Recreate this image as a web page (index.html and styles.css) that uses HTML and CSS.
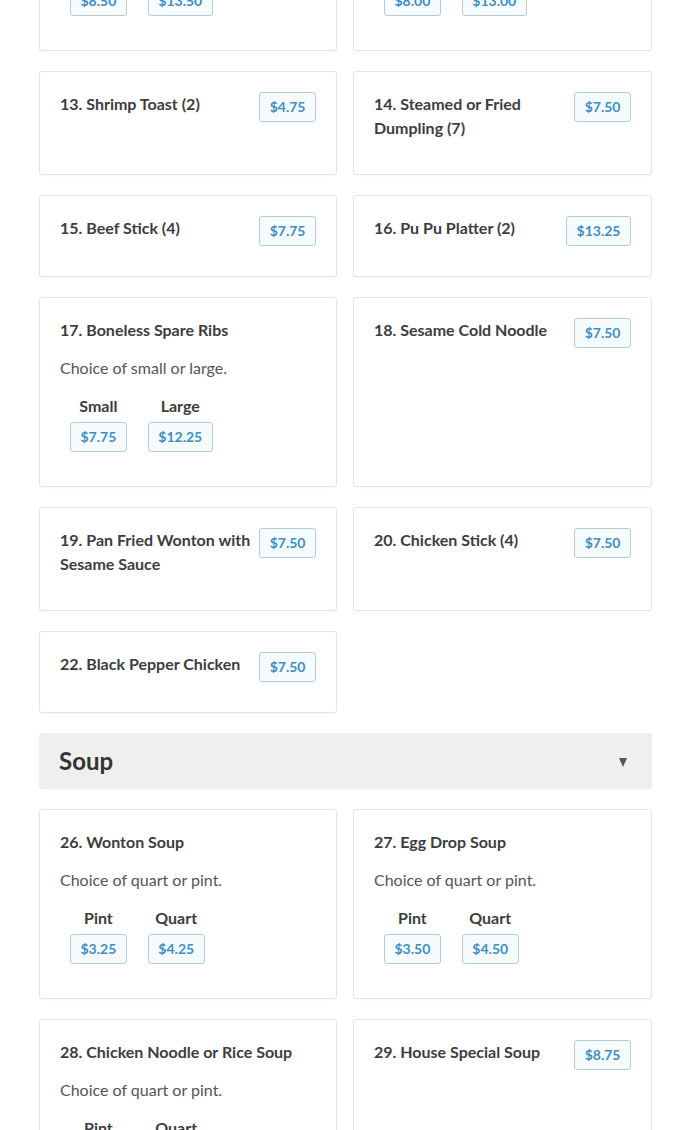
FILE: index.html
```html
<!DOCTYPE html>
<html lang="en">
<head>
<meta charset="utf-8">
<title>Menu</title>
<link rel="stylesheet" href="styles.css">
</head>
<body>
<main class="menu">
  <section class="grid">
    <article class="card">
      <div class="head"><h3 class="title">11. Chicken Wings</h3></div>
      <p class="desc">Choice of small or large.</p>
      <div class="options">
        <div class="opt"><span class="label">Small</span><span class="price">$8.50</span></div>
        <div class="opt"><span class="label">Large</span><span class="price">$13.50</span></div>
      </div>
    </article>
    <article class="card">
      <div class="head"><h3 class="title">12. Spare Ribs</h3></div>
      <p class="desc">Choice of small or large.</p>
      <div class="options">
        <div class="opt"><span class="label">Small</span><span class="price">$8.00</span></div>
        <div class="opt"><span class="label">Large</span><span class="price">$13.00</span></div>
      </div>
    </article>
    <article class="card">
      <div class="head"><h3 class="title">13. Shrimp Toast (2)</h3><span class="price">$4.75</span></div>
    </article>
    <article class="card">
      <div class="head"><h3 class="title">14. Steamed or Fried Dumpling (7)</h3><span class="price">$7.50</span></div>
    </article>
    <article class="card">
      <div class="head"><h3 class="title">15. Beef Stick (4)</h3><span class="price">$7.75</span></div>
    </article>
    <article class="card">
      <div class="head"><h3 class="title">16. Pu Pu Platter (2)</h3><span class="price">$13.25</span></div>
    </article>
    <article class="card">
      <div class="head"><h3 class="title">17. Boneless Spare Ribs</h3></div>
      <p class="desc">Choice of small or large.</p>
      <div class="options">
        <div class="opt"><span class="label">Small</span><span class="price">$7.75</span></div>
        <div class="opt"><span class="label">Large</span><span class="price">$12.25</span></div>
      </div>
    </article>
    <article class="card">
      <div class="head"><h3 class="title">18. Sesame Cold Noodle</h3><span class="price">$7.50</span></div>
    </article>
    <article class="card">
      <div class="head"><h3 class="title">19. Pan Fried Wonton with Sesame Sauce</h3><span class="price">$7.50</span></div>
    </article>
    <article class="card">
      <div class="head"><h3 class="title">20. Chicken Stick (4)</h3><span class="price">$7.50</span></div>
    </article>
    <article class="card">
      <div class="head"><h3 class="title">22. Black Pepper Chicken</h3><span class="price">$7.50</span></div>
    </article>
  </section>

  <header class="section-head">
    <h2 class="section-title">Soup</h2>
    <span class="caret"></span>
  </header>

  <section class="grid">
    <article class="card">
      <div class="head"><h3 class="title">26. Wonton Soup</h3></div>
      <p class="desc">Choice of quart or pint.</p>
      <div class="options">
        <div class="opt"><span class="label">Pint</span><span class="price">$3.25</span></div>
        <div class="opt"><span class="label">Quart</span><span class="price">$4.25</span></div>
      </div>
    </article>
    <article class="card">
      <div class="head"><h3 class="title">27. Egg Drop Soup</h3></div>
      <p class="desc">Choice of quart or pint.</p>
      <div class="options">
        <div class="opt"><span class="label">Pint</span><span class="price">$3.50</span></div>
        <div class="opt"><span class="label">Quart</span><span class="price">$4.50</span></div>
      </div>
    </article>
    <article class="card">
      <div class="head"><h3 class="title">28. Chicken Noodle or Rice Soup</h3></div>
      <p class="desc">Choice of quart or pint.</p>
      <div class="options">
        <div class="opt"><span class="label">Pint</span><span class="price">$3.25</span></div>
        <div class="opt"><span class="label">Quart</span><span class="price">$4.25</span></div>
      </div>
    </article>
    <article class="card">
      <div class="head"><h3 class="title">29. House Special Soup</h3><span class="price">$8.75</span></div>
    </article>
  </section>
</main>
</body>
</html>
```

FILE: styles.css
```css
html, body {
  margin: 0;
  padding: 0;
  background: #ffffff;
}

body {
  font-family: Lato, "Open Sans", "Liberation Sans", sans-serif;
  color: #3b3b3b;
  padding: 0 38px 0 39px;
  overflow: hidden;
}

.menu {
  margin-top: -139px;
  display: flex;
  flex-direction: column;
  gap: 20px;
}

.grid {
  display: grid;
  grid-template-columns: 298px 1fr;
  column-gap: 16px;
  row-gap: 20px;
}

.card {
  border: 1px solid #e4e4e4;
  border-radius: 3px;
  padding: 20px;
  background: #fff;
  box-shadow: 0 1px 2px rgba(0, 0, 0, 0.03);
}

.head {
  display: flex;
  justify-content: space-between;
  align-items: flex-start;
  gap: 8px;
}

.title {
  margin: 0 0 14px;
  font-size: 16px;
  line-height: 24px;
  font-weight: 700;
  color: #3d3d3f;
}

.head .price {
  margin-bottom: 10px;
}

.desc {
  margin: 0 0 14px;
  font-size: 16px;
  line-height: 24px;
  color: #555;
}

.options {
  display: flex;
  gap: 21px;
  padding-left: 10px;
  margin-bottom: 14px;
}

.opt {
  display: flex;
  flex-direction: column;
  align-items: center;
  gap: 4px;
}

.label {
  font-size: 16px;
  line-height: 24px;
  font-weight: 700;
  color: #3d3d3f;
}

.price {
  flex: none;
  display: inline-block;
  border: 1px solid #b3ccd9;
  border-radius: 3px;
  background: #f6fbfd;
  color: #3f8fc3;
  font-size: 14px;
  font-weight: 700;
  line-height: 28px;
  padding: 0 9.5px;
  white-space: nowrap;
}

.section-head {
  display: flex;
  align-items: center;
  justify-content: space-between;
  background: #efefef;
  border-radius: 3px;
  height: 56px;
  padding: 0 25px 0 20px;
  box-sizing: border-box;
}

.section-title {
  margin: 0;
  font-size: 24px;
  line-height: 28px;
  font-weight: 700;
  color: #333;
}

.caret {
  width: 0;
  height: 0;
  border-left: 4px solid transparent;
  border-right: 4px solid transparent;
  border-top: 9px solid #555;
  margin-top: 2px;
}
```
